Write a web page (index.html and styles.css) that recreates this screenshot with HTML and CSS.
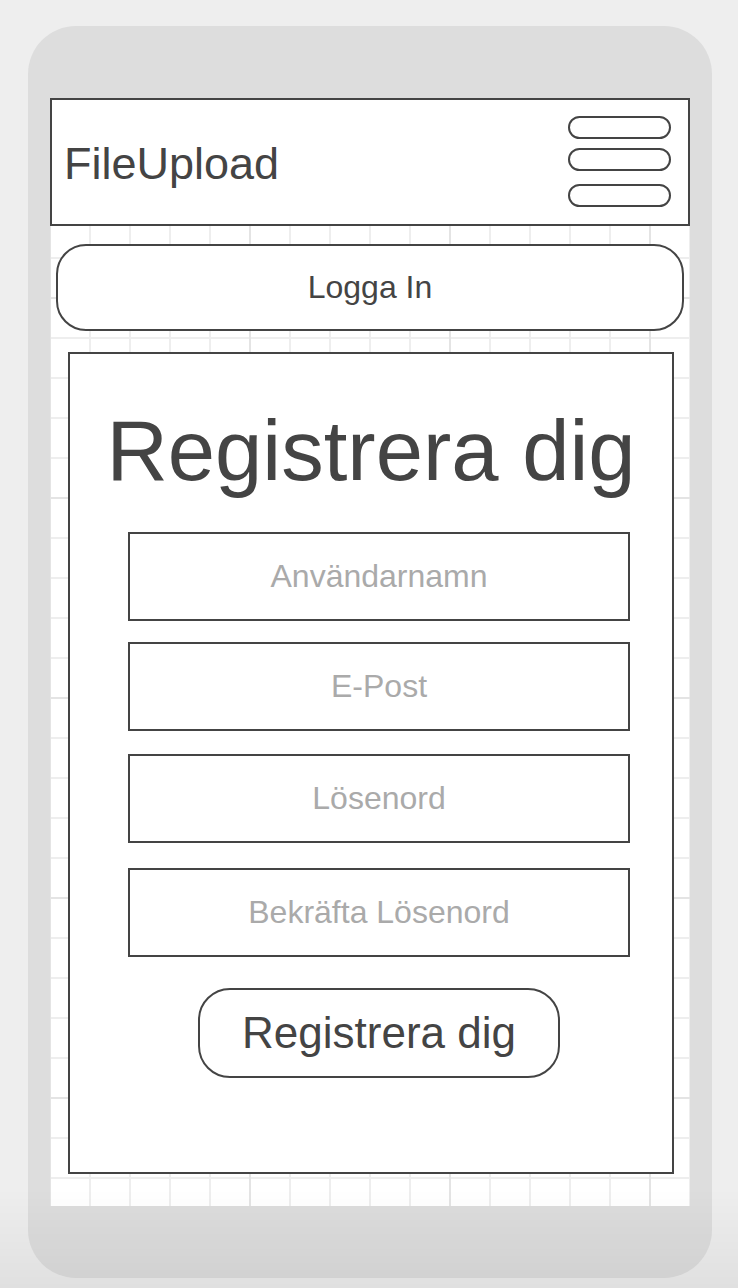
FILE: index.html
```html
<!DOCTYPE html>
<html lang="sv">
<head>
<meta charset="utf-8">
<title>FileUpload – Registrera dig</title>
<link rel="stylesheet" href="styles.css">
</head>
<body>
  <div class="phone">
    <div class="screen">
      <header class="topbar">
        <div class="brand">FileUpload</div>
        <div class="menu" aria-label="Meny">
          <span class="pill"></span>
          <span class="pill pill-2"></span>
          <span class="pill pill-3"></span>
        </div>
      </header>
      <button class="login-btn" type="button">Logga In</button>
      <section class="card">
        <h1 class="card-title">Registrera dig</h1>
        <div class="fields">
          <div class="field">Användarnamn</div>
          <div class="field field-2">E-Post</div>
          <div class="field field-3">Lösenord</div>
          <div class="field field-4">Bekräfta Lösenord</div>
          <button class="register-btn" type="button">Registrera dig</button>
        </div>
      </section>
    </div>
  </div>
</body>
</html>
```

FILE: styles.css
```css
* {
  box-sizing: border-box;
}

html, body {
  margin: 0;
  padding: 0;
}

body {
  background: #eeeeee;
  font-family: "Liberation Sans", Arial, Helvetica, sans-serif;
  color: #444444;
  height: 1288px;
  overflow: hidden;
  padding-top: 26px;
  padding-left: 28px;
}

body::after {
  content: "";
  position: fixed;
  left: 0;
  right: 0;
  bottom: 0;
  height: 100px;
  background: linear-gradient(to bottom, rgba(0, 0, 0, 0), rgba(0, 0, 0, 0.055));
  pointer-events: none;
}

.phone {
  width: 684px;
  height: 1252px;
  background: #dddddd;
  border-radius: 48px;
  padding: 72px 22px 72px 22px;
}

.screen {
  width: 640px;
  height: 1108px;
  background-color: #ffffff;
  background-image:
    linear-gradient(to right, #e4e4e4 2px, transparent 2px),
    linear-gradient(to bottom, #e4e4e4 2px, transparent 2px),
    linear-gradient(to right, #eeeeee 2px, transparent 2px),
    linear-gradient(to bottom, #eeeeee 2px, transparent 2px);
  background-size: 200px 200px, 200px 200px, 40px 40px, 40px 40px;
  background-position: -1px -1px, -1px -1px, -1px -1px, -1px -1px;
  display: flex;
  flex-direction: column;
}

.topbar {
  height: 128px;
  border: 2px solid #444444;
  background: #ffffff;
  display: flex;
  align-items: center;
  justify-content: space-between;
  padding: 0 17px 0 12px;
}

.brand {
  font-size: 45px;
  line-height: 1;
  margin-top: 2px;
}

.menu {
  display: flex;
  flex-direction: column;
  align-self: flex-start;
  padding-top: 16px;
}

.pill {
  display: block;
  width: 103px;
  height: 23px;
  border: 2px solid #444444;
  border-radius: 12px;
  background: #ffffff;
}

.pill-2 {
  margin-top: 9px;
}

.pill-3 {
  margin-top: 13px;
}

.login-btn {
  margin: 18px 6px 0 6px;
  height: 87px;
  border: 2px solid #444444;
  border-radius: 30px;
  background: #ffffff;
  font-family: inherit;
  font-size: 32px;
  color: #444444;
  padding: 0;
}

.card {
  margin: 21px 0 0 18px;
  width: 606px;
  height: 822px;
  border: 2px solid #444444;
  background: #ffffff;
  display: flex;
  flex-direction: column;
}

.card-title {
  margin: 47px 0 0 0;
  font-size: 85px;
  font-weight: normal;
  line-height: 100px;
  text-align: center;
  color: #444444;
}

.fields {
  margin: 31px 0 0 58px;
  width: 502px;
  display: flex;
  flex-direction: column;
}

.field {
  height: 89px;
  border: 2px solid #444444;
  background: #ffffff;
  display: flex;
  align-items: center;
  justify-content: center;
  font-size: 32px;
  color: #aaaaaa;
}

.field-2 {
  margin-top: 21px;
}

.field-3 {
  margin-top: 23px;
}

.field-4 {
  margin-top: 25px;
}

.register-btn {
  align-self: center;
  margin-top: 31px;
  width: 362px;
  height: 90px;
  border: 2px solid #444444;
  border-radius: 32px;
  background: #ffffff;
  font-family: inherit;
  font-size: 44px;
  color: #444444;
  padding: 0;
}
```
